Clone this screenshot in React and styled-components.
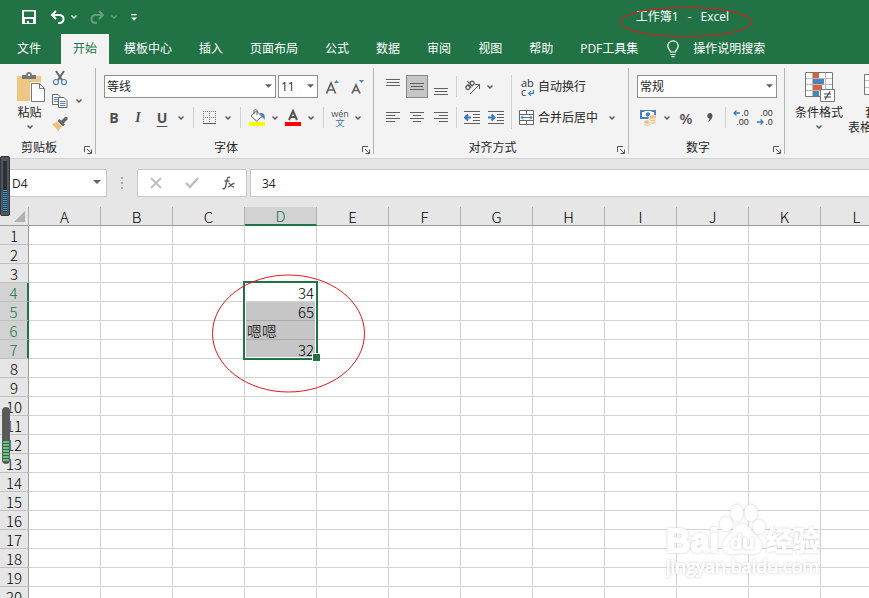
import { Fragment } from "react"
import styled, { createGlobalStyle, css } from "styled-components"

const GREEN = "#217346"
const UI_FONT = '"Open Sans", "Noto Sans CJK SC", sans-serif'
const CELL_FONT = '"Noto Sans CJK SC", sans-serif'

const GlobalStyle = createGlobalStyle`
  * {
    box-sizing: border-box;
  }
  body {
    margin: 0;
    overflow: hidden;
    font-family: ${UI_FONT};
    font-size: 12px;
    line-height: 16px;
    color: #262626;
  }
  button, input, select {
    margin: 0;
    padding: 0;
    border: none;
    border-radius: 0;
    background: none;
    color: inherit;
    font: inherit;
    outline: none;
  }
  svg {
    display: block;
    flex: none;
  }
`

const Window = styled.div`
  position: relative;
  display: flex;
  flex-direction: column;
  height: 100vh;
  overflow: hidden;
  background: #fff;
`

const TitleBar = styled.header`
  display: flex;
  align-items: center;
  height: 34px;
  padding: 0 140px 0 21px;
  color: #fff;
  background: ${GREEN};
`

const QuickAccess = styled.div`
  display: flex;
  align-items: center;
  gap: 4px;
`

const QuickButton = styled.button`
  display: flex;
  justify-content: center;
  width: ${(p) => (p.$narrow ? 10 : 16)}px;
  margin-right: ${(p) => (p.$narrow ? 6 : 0)}px;
  margin-left: ${(p) => (p.$first ? 8 : 0)}px;
  opacity: ${(p) => (p.disabled ? 0.3 : 1)};
`

const DocTitle = styled.h1`
  position: relative;
  display: flex;
  gap: 9px;
  margin: 0 0 0 auto;
  font-size: 12px;
  font-weight: 400;
`

const TitleMark = styled.svg`
  position: absolute;
  top: -3px;
  left: -17px;
`

const Tabs = styled.nav`
  display: flex;
  gap: 3px;
  height: 30px;
  padding-left: 5px;
  background: ${GREEN};
`

const Tab = styled.button`
  padding: 0 12px 1px;
  white-space: nowrap;
  color: ${(p) => (p.$active ? GREEN : "#fff")};
  background: ${(p) => (p.$active ? "#f3f3f3" : "transparent")};

  &:first-child {
    margin-right: 5px;
  }
`

const TellMe = styled(Tab)`
  display: flex;
  align-items: center;
  gap: 12px;
`

const Ribbon = styled.section`
  display: flex;
  padding: 4px 0;
  background: #f3f3f3;
  border-bottom: 1px solid #d2d2d2;
`

const GroupBox = styled.div`
  display: flex;
  flex: none;
  flex-direction: column;
  justify-content: space-between;
  width: ${(p) => p.$width}px;
  height: 86px;
  border-right: 1px solid #b5b5b5;
`

const GroupBody = styled.div`
  display: flex;
  padding: 7px 0 0 8px;
`

const GroupFooter = styled.div`
  display: flex;
  align-items: flex-end;
  gap: 6px;
  padding-right: 3px;
`

const GroupLabel = styled.span`
  flex: 1;
  line-height: 12px;
  text-align: center;
`

const Stack = styled.div`
  display: flex;
  flex-direction: column;
  gap: 8px;
`

const Row = styled.div`
  display: flex;
  align-items: center;
  gap: ${(p) => p.$gap ?? 2}px;
  height: 23px;
`

const ToolButton = styled.button`
  display: flex;
  align-items: center;
  justify-content: center;
  width: ${(p) => p.$width ?? 22}px;
  height: 23px;
  color: #505050;

  ${(p) =>
    p.$pressed &&
    css`
      background: #c6c6c6;
      border: 1px solid #868686;
    `}
`

const LetterButton = styled(ToolButton)`
  font-size: 14px;
  font-weight: 700;
  font-style: ${(p) => (p.$italic ? "italic" : "normal")};
  font-family: ${(p) => (p.$italic ? '"Liberation Serif", serif' : UI_FONT)};
  text-decoration: ${(p) => (p.$underline ? "underline" : "none")};
  text-underline-offset: 3px;
`

const PercentButton = styled(ToolButton)`
  font-size: 15px;
  font-weight: 600;
`

const TextButton = styled.button`
  display: flex;
  align-items: center;
  gap: 3px;
  height: 23px;
  padding: 0 6px 0 3px;
  white-space: nowrap;
`

const Divider = styled.span`
  width: 1px;
  height: ${(p) => (p.$tall ? 54 : 21)}px;
  margin: 0 ${(p) => p.$space ?? 2}px;
  background: #d0d0d0;
`

const SelectBox = styled.div`
  position: relative;
  width: ${(p) => p.$width}px;
  height: 23px;

  select {
    width: 100%;
    height: 100%;
    padding-left: 2px;
    appearance: none;
    background: #fff;
    border: 1px solid #8f8f8f;
  }

  svg {
    position: absolute;
    top: 9px;
    right: 4px;
    pointer-events: none;
  }
`

const Clipboard = styled.div`
  display: flex;
  gap: 10px;
  padding: 2px 0 0 17px;
`

const BigButton = styled.button`
  display: flex;
  flex: none;
  flex-direction: column;
  align-items: center;
  height: 66px;
  padding-top: 2px;
  line-height: 15px;
  white-space: nowrap;

  > svg:first-child {
    margin-bottom: 2px;
    overflow: visible;
  }
  > svg:last-child {
    margin-top: 5px;
  }
`

const SmallTools = styled.div`
  display: grid;
  grid-template-columns: 18px 14px;
  grid-auto-rows: 23px;
  align-content: start;
  align-items: center;
  height: 66px;
  margin-top: -4px;

  button {
    width: 18px;
  }
`

const Styles = styled.div`
  display: flex;
  gap: 5px;
  padding: 2px 0 0 10px;
`

const LabelLine = styled.span`
  display: flex;
  align-items: center;
  gap: 4px;
`

const FormulaRow = styled.div`
  display: flex;
  align-items: center;
  height: 48px;
  background: #e6e6e6;
`

const NameBox = styled.div`
  position: relative;
  width: 107px;
  height: 28px;

  input {
    width: 100%;
    height: 100%;
    padding: 0 24px 0 11px;
    background: #fff;
    border: 1px solid #c6c6c6;
  }

  svg {
    position: absolute;
    top: 11px;
    right: 6px;
  }
`

const Grip = styled.div`
  display: flex;
  flex-direction: column;
  align-items: center;
  gap: 3px;
  width: 30px;

  span {
    width: 2px;
    height: 2px;
    background: #a6a6a6;
  }
`

const FormulaButtons = styled.div`
  display: flex;
  align-items: center;
  justify-content: space-around;
  width: 110px;
  height: 28px;
  margin-right: 3px;
  background: #fff;
  border: 1px solid #c6c6c6;
`

const FormulaInput = styled.input`
  flex: 1;
  min-width: 0;
  height: 28px;

  && {
    padding: 0 11px;
    background: #fff;
    border: 1px solid #c6c6c6;
    border-right: none;
  }
`

const Sheet = styled.main`
  position: relative;
  flex: 1;
  min-height: 0;
  overflow: hidden;
`

const Grid = styled.table`
  width: 893px;
  table-layout: fixed;
  border-collapse: separate;
  border-spacing: 0;
  font-family: ${CELL_FONT};
  font-size: 15px;
  font-weight: 300;
  line-height: 16px;
  color: #000;
`

const headSelected = css`
  color: ${GREEN};
  background: #d2d2d2;
`

const Corner = styled.th`
  width: 29px;
  height: 19px;
  padding: 0 3px 0 0;
  background: #e6e6e6;
  border-right: 1px solid #b1b1b1;
  border-bottom: 1px solid #9b9b9b;

  svg {
    margin-left: auto;
  }
`

const ColHead = styled.th`
  width: 72px;
  height: 19px;
  padding: 1px 0 0;
  font-weight: inherit;
  background: #e6e6e6;
  border-right: 1px solid #b1b1b1;
  border-bottom: 1px solid #9b9b9b;

  ${(p) =>
    p.$selected &&
    css`
      ${headSelected}
      border-bottom: 2px solid ${GREEN};
    `}
`

const RowHead = styled.th`
  height: 19px;
  padding: 2px 0 0;
  font-weight: inherit;
  background: #e6e6e6;
  border-right: 1px solid #9b9b9b;
  border-bottom: 1px solid #c0c0c0;

  ${(p) =>
    p.$selected &&
    css`
      ${headSelected}
      border-right: 2px solid ${GREEN};
    `}
`

const Cell = styled.td`
  position: relative;
  height: 19px;
  padding: 2px 2px 0;
  text-align: ${(p) => (p.$text ? "left" : "right")};
  white-space: nowrap;
  background: ${(p) => (p.$filled ? "#c6c6c6" : "#fff")};
  border-right: 1px solid #d4d4d4;
  border-bottom: 1px solid ${(p) => (p.$filled ? "#a9a9a9" : "#d4d4d4")};
`

const Selection = styled.div`
  position: absolute;
  z-index: 1;
  top: -2px;
  left: -2px;
  width: 75px;
  height: 79px;
  border: 2px solid ${GREEN};
  box-shadow: inset 0 0 0 1px #fff;

  &::after {
    content: "";
    position: absolute;
    right: -4px;
    bottom: -4px;
    width: 7px;
    height: 7px;
    background: ${GREEN};
    border: 1px solid #fff;
    border-right: none;
  }
`

const SheetMark = styled.svg`
  position: absolute;
  z-index: 2;
  top: 67px;
  left: 211px;
`

const Watermark = styled.svg`
  position: absolute;
  z-index: 2;
  right: 44px;
  bottom: 16px;

  text, path, ellipse {
    filter: drop-shadow(0 0 1px #c8c8c8);
  }
`

const BlueMeter = styled.div`
  position: absolute;
  top: 156px;
  left: 0;
  width: 10px;
  height: 60px;
  padding: 4px 2px;
  background: #50565c;
  border: 1px solid #33363a;
  border-radius: 2px;

  &::before,
  &::after {
    content: "";
    display: block;
    height: 29px;
    background: #2b3138;
  }
  &::after {
    height: 22px;
    background: repeating-linear-gradient(#2aa7ea 0 1px, #2b3138 1px 2px);
  }
`

const GreenMeter = styled.div`
  position: absolute;
  top: 407px;
  left: 2px;
  width: 8px;
  height: 57px;
  padding: 34px 1px 2px;
  background: #5a5a5a;
  border-radius: 4px;
  box-shadow: 0 0 2px #fff;

  &::after {
    content: "";
    display: block;
    height: 100%;
    background: repeating-linear-gradient(#5cc878 0 2px, #4d5b50 2px 3px);
  }
`

const Chevron = ({ color = "#555" }) => (
  <svg width="6" height="4" viewBox="0 0 6 4" fill="none" stroke={color} strokeWidth="1.4">
    <path d="M.5.6 3 3 5.500.6" />
  </svg>
)

const Triangle = ({ size = 7 }) => (
  <svg width={size} height="4" viewBox="0 0 8 4" fill="#606060">
    <path d="M0 0h8L4 4z" />
  </svg>
)

const Lines = ({ rows, top = 3, step = 4 }) => (
  <svg width="16" height="16" viewBox="0 0 16 16" fill="none" stroke="#606060">
    {rows.map(([from, to], i) => (
      <path key={i} d={`M${from} ${top + i * step + 0.5}H${to}`} />
    ))}
  </svg>
)

const Launcher = () => (
  <svg width="8" height="8" viewBox="0 0 8 8" fill="none" stroke="#555">
    <path d="M.5 6V.5H6M3 3l4 4M7.500 3.500v4h-4" />
  </svg>
)

const SaveIcon = () => (
  <svg width="14" height="14" viewBox="0 0 14 14">
    <path fillRule="evenodd" fill="#fff" d="M0 0h14v14H0zM2 1.500V7h10V1.500zM3 9v4h2v-2h2v2h4V9z" />
  </svg>
)

const UndoIcon = ({ flip }) => (
  <svg width="15" height="14" viewBox="0 0 15 14" fill="none" stroke="#fff" strokeWidth="2">
    <g transform={flip ? "matrix(-1 0 0 1 15 0)" : undefined}>
      <path d="M6 1 2 5l4 4M2.500 5H9c3 0 4.500 1.800 4.500 4S12 13 9 13H8" />
    </g>
  </svg>
)

const CustomizeIcon = () => (
  <svg width="6" height="7" viewBox="0 0 6 7" fill="#fff">
    <path d="M0 0h6v1.200H0zM0 3.500h6L3 6.800z" />
  </svg>
)

const BulbIcon = () => (
  <svg width="16" height="18" viewBox="0 0 16 18" fill="none" stroke="#fff" strokeWidth="1.200">
    <path d="M5.500 12c0-2-2.700-3-2.700-6a5.200 5.200 0 0 1 10.400 0c0 3-2.700 4-2.700 6zM5.500 14.500h5M6.500 16.600h3" />
  </svg>
)

const PasteIcon = () => (
  <svg width="25" height="31" viewBox="0 0 25 31">
    <path fill="#eec783" d="M0 4h24v25H0z" />
    <path fill="#777" d="M5 7V3h4c0-4 6-4 6 0h4v4z" />
    <path fill="#f3f3f3" d="M11 2h2v2h-2z" />
    <path fill="#fff" stroke="#f3f3f3" strokeWidth="3" d="M14.500 11.500h8l5 5v13h-13z" />
    <path fill="#fff" stroke="#777" d="M14.500 11.500h8l5 5v13h-13zM22.500 11.500v5h5" />
  </svg>
)

const CutIcon = () => (
  <svg width="16" height="16" viewBox="0 0 16 16" fill="none">
    <path stroke="#666" strokeWidth="2" d="m4 1 6 9M12 1 6 10" />
    <circle cx="4" cy="12" r="2.500" stroke="#4a82bd" strokeWidth="1.200" />
    <circle cx="12" cy="12" r="2.500" stroke="#4a82bd" strokeWidth="1.200" />
  </svg>
)

const CopyIcon = () => (
  <svg width="16" height="16" viewBox="0 0 16 16" fill="#fff">
    <path stroke="#666" d="M.5 1.500H6L8.500 4v7.500h-8z" />
    <path stroke="#4a82bd" d="M2 4.500h4M2 6.500h4M2 8.500h4" />
    <path stroke="#666" d="M6.500 4.500H12l3 3v7h-8.500z" />
    <path stroke="#4a82bd" d="M8 8.500h5.500M8 10.500h5.500M8 12.500h5.500" />
  </svg>
)

const BrushIcon = () => (
  <svg width="16" height="16" viewBox="0 0 16 16">
    <path fill="#ebc07c" d="M0 8c2-.5 4-1.500 5-2.500l5 5C8 12 7 14 7 15.500z" />
    <path fill="#666" d="m5.500 5 2-2L13 8.500l-2 2zM9 5l4-4c1.500-1 3.500.5 2.500 2.500l-4 4z" />
  </svg>
)

const FontSizeIcon = ({ down }) => (
  <svg width="16" height="18" viewBox="0 0 16 18">
    <path
      fill="none"
      stroke="#606060"
      strokeWidth="1.700"
      d={down ? "M3 15.500 7 7 11 15.500M4.500 12.500h5" : "M2.500 15.500 7 5 11.500 15.500M4 12h6"}
    />
    <path fill="#4a82bd" d={down ? "M10 2h5l-2.500 3z" : "M10 5h5l-2.500-3z"} />
  </svg>
)

const BorderIcon = () => (
  <svg width="14" height="14" viewBox="0 0 14 14" fill="none" stroke="#777">
    <path strokeDasharray="1 1" d="M0 .5h13M0 6.500h13M.5 0v12M6.500 0v12M12.500 0v12" />
    <path stroke="#555" d="M0 12.500h13" />
  </svg>
)

const FillIcon = () => (
  <svg width="17" height="17" viewBox="0 0 17 17">
    <path fill="#4a82bd" d="M11 4c4-.5 5.500 2 4.500 7-1-2-2-3-4-3.500z" />
    <path fill="#fff" stroke="#606060" d="m2 7 5.500-5L13 7.500 7.500 12z" />
    <path fill="none" stroke="#606060" d="M5 5V1.500C5 .5 8 .5 8 1.500V6" />
    <path fill="#ff0" d="M0 13h16v4H0z" />
  </svg>
)

const FontColorIcon = () => (
  <svg width="16" height="17" viewBox="0 0 16 17">
    <path fill="none" stroke="#555" strokeWidth="2" d="m4 11 4-9 4 9M5 8h6" />
    <path fill="#f00" d="M0 13h16v4H0z" />
  </svg>
)

const PhoneticMark = styled.span`
  display: flex;
  flex-direction: column;
  align-items: center;
  font-size: 9px;
  line-height: 9px;

  span {
    color: #3a78b8;
  }
`

const OrientIcon = () => (
  <svg width="16" height="16" viewBox="0 0 16 16" fill="none" stroke="#555">
    <g transform="rotate(-45 5 6)" strokeWidth="1.300">
      <circle cx="2.500" cy="7" r="2" />
      <path d="M4.500 4.500v5M6.500 2v7.500" />
      <circle cx="8.500" cy="7" r="2" />
    </g>
    <path d="m6 15 9-9M11 5.500h4.500V10" />
  </svg>
)

const IndentIcon = ({ right }) => (
  <svg width="16" height="14" viewBox="0 0 16 14" fill="none" stroke="#606060">
    <path d="M0 .5h16M9 3.500h7M9 6.500h7M9 9.500h7M0 12.500h16" />
    <path stroke="#3a78b8" strokeWidth="2" d={right ? "M0 6.500h6M3.500 3.500l3 3-3 3" : "M7 6.500H1M4 3.500l-3 3 3 3"} />
  </svg>
)

const WrapMark = styled.span`
  position: relative;
  width: 16px;
  padding-left: 2px;
  font-size: 11px;
  line-height: 9px;
  text-align: left;
  color: #333;

  svg {
    position: absolute;
    right: 1px;
    bottom: 0;
  }
`

const MergeIcon = () => (
  <svg width="16" height="16" viewBox="0 0 16 16" fill="none" stroke="#666">
    <path fill="#fff" d="M.5.5h14v14H.5z" />
    <path d="M.5 4.500h14M.5 10.500h14M7.500.5v4M7.500 10.500v4" />
    <path stroke="#3a78b8" d="M2 7.500h11M4 5.500l-2 2 2 2M11 5.500l2 2-2 2" />
  </svg>
)

const CurrencyIcon = () => (
  <svg width="17" height="17" viewBox="0 0 17 17">
    <path fill="#4a82bd" d="M0 1h16v9H0z" />
    <path fill="#fff" d="M2 3h2l1-1h6l1 1h2v5H2z" />
    <circle cx="8" cy="5.500" r="2.300" fill="#4a82bd" />
    <path fill="#ebc07c" stroke="#f3f3f3" strokeWidth=".8" d="M9 7.500c0-2 7-2 7 0v6c0 2-7 2-7 0zM4 12.500c0-2 7-2 7 0v3c0 2-7 2-7 0z" />
    <path fill="none" stroke="#fff" d="M9 9.500c1 1 6 1 7 0M9 12c1 1 6 1 7 0M4 14.500c1 1 6 1 7 0" />
  </svg>
)

const DecimalMark = styled.span`
  display: flex;
  flex-direction: column;
  align-items: flex-end;
  font-family: "Liberation Sans", sans-serif;
  font-size: 9px;
  line-height: 9px;
  color: #333;

  span {
    display: flex;
    align-items: center;
    gap: 1px;
  }
`

const Arrow = ({ right }) => (
  <svg width="7" height="6" viewBox="0 0 7 6" fill="none" stroke="#3a78b8" strokeWidth="1.300">
    <path d={right ? "M0 3h6M3.500.5 6 3 3.500 5.500" : "M7 3H1M3.500.5 1 3l2.500 2.500"} />
  </svg>
)

const ConditionalIcon = () => (
  <svg width="29" height="31" viewBox="0 0 29 31">
    <path fill="#fff" stroke="#777" d="M.5.5h27v24H.5z" />
    <path stroke="#bbb" d="M1 6.500h26M1 12.500h26M1 18.500h26M7.500 1v23M20.500 1v23" />
    <path fill="#d9603b" d="M8 1h6v5H8zM8 13h9v5H8z" />
    <path fill="#4a82bd" d="M8 7h11v5H8zM8 19h6v5H8z" />
    <path fill="#fff" stroke="#777" d="M15.500 17.500h14v12h-14z" />
    <path stroke="#444" strokeWidth="1.200" d="M19 22h7M19 25h7M25 19.500l-5 8" />
  </svg>
)

const TableIcon = () => (
  <svg width="27" height="31" viewBox="0 0 27 31" fill="none">
    <path fill="#fff" stroke="#777" d="M.5 2.500h26v20H.5z" />
    <path stroke="#bbb" d="M1 8.500h25M1 15.500h25M8.500 3v19M17.500 3v19" />
  </svg>
)

const CornerIcon = () => (
  <svg width="11" height="11" viewBox="0 0 11 11" fill="#b1b1b1">
    <path d="M11 0v11H0z" />
  </svg>
)

function Group({ label, width, children }) {
  return (
    <GroupBox $width={width}>
      {children}
      <GroupFooter>
        <GroupLabel>{label}</GroupLabel>
        <button aria-label={`${label}设置`}>
          <Launcher />
        </button>
      </GroupFooter>
    </GroupBox>
  )
}

function Dropdown({ label, value, width }) {
  return (
    <SelectBox $width={width}>
      <select aria-label={label} defaultValue={value}>
        <option>{value}</option>
      </select>
      <Triangle />
    </SelectBox>
  )
}

function More({ label, width = 10 }) {
  return (
    <ToolButton $width={width} aria-label={label}>
      <Chevron />
    </ToolButton>
  )
}

const tabs = ["文件", "开始", "模板中心", "插入", "页面布局", "公式", "数据", "审阅", "视图", "帮助", "PDF工具集"]
const columns = "ABCDEFGHIJKL".split("")
const rows = Array.from({ length: 20 }, (_, i) => i + 1)
const values = { D4: "34", D5: "65", D6: "嗯嗯", D7: "32" }

const left = [[1, 15], [1, 10], [1, 15], [1, 10]]
const center = [[1, 15], [4, 12], [1, 15], [4, 12]]
const right = [[1, 15], [6, 15], [1, 15], [6, 15]]
const bars = [[1, 15], [2, 14], [1, 15]]

function HomeRibbon() {
  return (
    <Ribbon>
      <Group label="剪贴板" width={96}>
        <Clipboard>
          <BigButton>
            <PasteIcon />
            粘贴
            <Chevron />
          </BigButton>
          <SmallTools>
            <button aria-label="剪切"><CutIcon /></button>
            <span />
            <button aria-label="复制"><CopyIcon /></button>
            <More label="复制选项" width={18} />
            <button aria-label="格式刷"><BrushIcon /></button>
          </SmallTools>
        </Clipboard>
      </Group>

      <Group label="字体" width={278}>
        <GroupBody>
          <Stack>
            <Row>
              <Dropdown label="字体" value="等线" width={172} />
              <Dropdown label="字号" value="11" width={40} />
              <ToolButton $width={24} aria-label="增大字号"><FontSizeIcon /></ToolButton>
              <ToolButton $width={22} aria-label="减小字号"><FontSizeIcon down /></ToolButton>
            </Row>
            <Row $gap={4}>
              <LetterButton $width={20}>B</LetterButton>
              <LetterButton $width={20} $italic>I</LetterButton>
              <LetterButton $width={20} $underline>U</LetterButton>
              <More label="下划线选项" />
              <Divider $space={3} />
              <ToolButton $width={18} aria-label="边框"><BorderIcon /></ToolButton>
              <More label="边框选项" />
              <Divider $space={3} />
              <ToolButton $width={18} aria-label="填充颜色"><FillIcon /></ToolButton>
              <More label="填充颜色选项" />
              <ToolButton $width={18} aria-label="字体颜色"><FontColorIcon /></ToolButton>
              <More label="字体颜色选项" />
              <Divider $space={3} />
              <ToolButton $width={18}>
                <PhoneticMark>wén<span>文</span></PhoneticMark>
              </ToolButton>
              <More label="拼音选项" />
            </Row>
          </Stack>
        </GroupBody>
      </Group>

      <Group label="对齐方式" width={255}>
        <GroupBody>
          <Stack>
            <Row>
              <ToolButton aria-label="顶端对齐"><Lines rows={bars} top={0} step={3} /></ToolButton>
              <ToolButton $pressed aria-label="垂直居中"><Lines rows={bars} top={4} step={3} /></ToolButton>
              <ToolButton aria-label="底端对齐"><Lines rows={bars} top={9} step={3} /></ToolButton>
              <Divider />
              <ToolButton aria-label="方向"><OrientIcon /></ToolButton>
              <More label="方向选项" />
            </Row>
            <Row>
              <ToolButton aria-label="左对齐"><Lines rows={left} top={2} step={3} /></ToolButton>
              <ToolButton aria-label="居中"><Lines rows={center} top={2} step={3} /></ToolButton>
              <ToolButton aria-label="右对齐"><Lines rows={right} top={2} step={3} /></ToolButton>
              <Divider />
              <ToolButton aria-label="减少缩进量"><IndentIcon /></ToolButton>
              <ToolButton aria-label="增加缩进量"><IndentIcon right /></ToolButton>
            </Row>
          </Stack>
          <Divider $tall $space={4} />
          <Stack>
            <TextButton>
              <WrapMark>
                ab<br />c
                <svg width="6" height="6" viewBox="0 0 6 6" fill="none" stroke="#3a78b8" strokeWidth="1.200">
                  <path d="M5.400 0v3.500H1M3 1.200.8 3.500 3 5.800" />
                </svg>
              </WrapMark>
              自动换行
            </TextButton>
            <Row $gap={0}>
              <TextButton>
                <MergeIcon />
                合并后居中
              </TextButton>
              <More label="合并选项" width={16} />
            </Row>
          </Stack>
        </GroupBody>
      </Group>

      <Group label="数字" width={156}>
        <GroupBody>
          <Stack>
            <Dropdown label="数字格式" value="常规" width={140} />
            <Row>
              <ToolButton aria-label="会计数字格式"><CurrencyIcon /></ToolButton>
              <More label="会计数字格式选项" width={12} />
              <PercentButton>%</PercentButton>
              <ToolButton aria-label="千位分隔样式">
                <svg width="6" height="9" viewBox="0 0 6 9" fill="#555">
                  <path d="M3 0c4 0 3 7-2 9-.5-.5 1.500-2 1.500-3.500C-.5 5.500-.5 0 3 0z" />
                </svg>
              </ToolButton>
              <Divider />
              <ToolButton aria-label="增加小数位数">
                <DecimalMark><span><Arrow />.0</span><span>.00</span></DecimalMark>
              </ToolButton>
              <ToolButton aria-label="减少小数位数">
                <DecimalMark><span>.00</span><span><Arrow right />.0</span></DecimalMark>
              </ToolButton>
            </Row>
          </Stack>
        </GroupBody>
      </Group>

      <Styles>
        <BigButton>
          <ConditionalIcon />
          条件格式
          <Chevron />
        </BigButton>
        <BigButton>
          <TableIcon />
          套用
          <LabelLine>表格格式<Chevron /></LabelLine>
        </BigButton>
      </Styles>
    </Ribbon>
  )
}

function Worksheet() {
  return (
    <Grid>
      <thead>
        <tr>
          <Corner aria-label="全选"><CornerIcon /></Corner>
          {columns.map((c) => (
            <ColHead key={c} scope="col" $selected={c === "D"}>{c}</ColHead>
          ))}
        </tr>
      </thead>
      <tbody>
        {rows.map((r) => (
          <tr key={r}>
            <RowHead scope="row" $selected={r >= 4 && r <= 7}>{r}</RowHead>
            {columns.map((c) => {
              const id = c + r
              return (
                <Cell key={id} $text={id === "D6"} $filled={c === "D" && r > 4 && r < 8}>
                  {values[id]}
                  {id === "D4" && <Selection />}
                </Cell>
              )
            })}
          </tr>
        ))}
      </tbody>
    </Grid>
  )
}

function BaiduMark() {
  return (
    <Watermark width="160" height="80" viewBox="0 0 160 80" fill="#fff" stroke="#fff" strokeLinejoin="round">
      <g fontFamily="Liberation Sans, Noto Sans CJK SC, sans-serif" fontWeight="700" strokeWidth="2">
        <text x="1" y="50" fontSize="34">Bai</text>
        <text x="101" y="49" fontSize="27" strokeWidth="1">经验</text>
      </g>
      <ellipse cx="61" cy="22" rx="6" ry="7" />
      <ellipse cx="72" cy="11" rx="6" ry="8" />
      <ellipse cx="86" cy="11" rx="6" ry="8" />
      <ellipse cx="94" cy="25" rx="6" ry="7" />
      <path d="M77 22c6 0 8 7 14 12 9 8 6 18-3 18-5 0-7-1-11-1s-6 1-11 1c-9 0-12-10-3-18 6-5 8-12 14-12z" />
      <text x="65" y="47" fontSize="20" fontWeight="700" fontFamily="Liberation Sans, sans-serif">du</text>
      <text x="1" y="71" fontSize="18" fontFamily="Open Sans, sans-serif">jingyan.baidu.com</text>
    </Watermark>
  )
}

export default function App() {
  return (
    <Fragment>
      <GlobalStyle />
      <Window>
        <TitleBar>
          <QuickAccess>
            <QuickButton aria-label="保存"><SaveIcon /></QuickButton>
            <QuickButton $first aria-label="撤消"><UndoIcon /></QuickButton>
            <QuickButton $narrow aria-label="撤消选项"><Chevron color="#fff" /></QuickButton>
            <QuickButton disabled aria-label="恢复"><UndoIcon flip /></QuickButton>
            <QuickButton $narrow disabled aria-label="恢复选项"><Chevron color="#fff" /></QuickButton>
            <QuickButton $narrow aria-label="自定义快速访问工具栏"><CustomizeIcon /></QuickButton>
          </QuickAccess>
          <DocTitle>
            <span>工作簿1</span>
            <span>-</span>
            <span>Excel</span>
            <TitleMark width="134" height="32" viewBox="0 0 134 32" fill="none" stroke="#e8141c">
              <ellipse cx="67" cy="16" rx="66" ry="14.500" />
            </TitleMark>
          </DocTitle>
        </TitleBar>

        <Tabs>
          {tabs.map((t) => (
            <Tab key={t} $active={t === "开始"}>{t}</Tab>
          ))}
          <TellMe><BulbIcon />操作说明搜索</TellMe>
        </Tabs>

        <HomeRibbon />

        <FormulaRow>
          <NameBox>
            <input aria-label="名称框" defaultValue="D4" />
            <Triangle size={8} />
          </NameBox>
          <Grip><span /><span /><span /></Grip>
          <FormulaButtons>
            <button aria-label="取消">
              <svg width="12" height="12" viewBox="0 0 12 12" stroke="#bdbdbd" strokeWidth="1.800">
                <path d="m1 1 10 10M11 1 1 11" />
              </svg>
            </button>
            <button aria-label="输入">
              <svg width="14" height="12" viewBox="0 0 14 12" fill="none" stroke="#bdbdbd" strokeWidth="2.400">
                <path d="m1 6 4 4 8-9" />
              </svg>
            </button>
            <button aria-label="插入函数">
              <svg width="13" height="14" viewBox="0 0 13 14" fill="none" stroke="#606060" strokeWidth="1.400">
                <path d="M8 1.500C6 .5 5.500 2 5 4L3.500 11c-.3 1.500-1.500 2-3 1.500M2.500 5h5M6.500 7.500c2-1 2.500 4 5.500 3.500M12.500 7.200C10 7 8.500 11 6 11" />
              </svg>
            </button>
          </FormulaButtons>
          <FormulaInput aria-label="编辑栏" defaultValue="34" />
        </FormulaRow>

        <Sheet>
          <Worksheet />
          <SheetMark width="155" height="119" viewBox="0 0 155 119" fill="none" stroke="#e8141c">
            <ellipse cx="77.500" cy="59.500" rx="76" ry="58.500" />
          </SheetMark>
          <BaiduMark />
        </Sheet>

        <BlueMeter />
        <GreenMeter />
      </Window>
    </Fragment>
  )
}
